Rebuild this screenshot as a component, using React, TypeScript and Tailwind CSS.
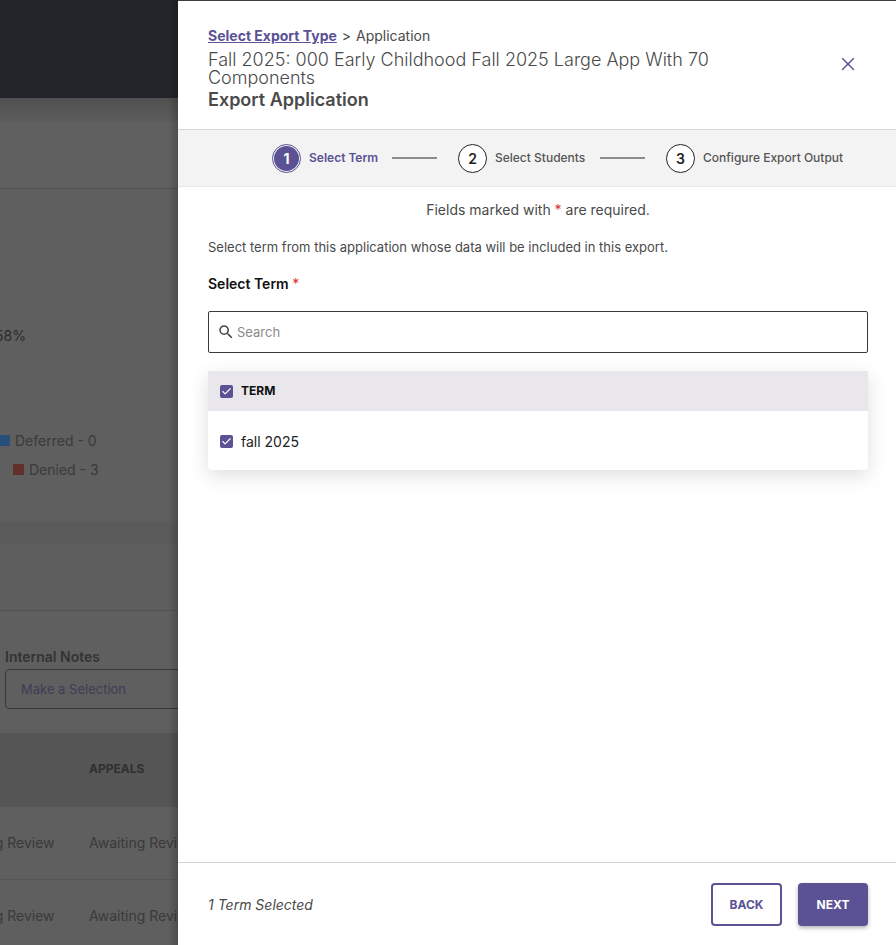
import { Check, X } from "lucide-react";

const steps = [
  { n: 1, label: "Select Term", active: true, width: "w-[69px]" },
  { n: 2, label: "Select Students", active: false, width: "w-[91px]" },
  { n: 3, label: "Configure Export Output", active: false, width: "w-[142px]" },
];

function Background() {
  return (
    <div className="relative flex h-full w-[178px] shrink-0 flex-col overflow-hidden bg-[#5f5f5f] text-[14px] text-[#3a3a3a]">
      <div className="h-[98px] shrink-0 bg-[#24252a]" />
      <div className="h-[24px] shrink-0 bg-gradient-to-b from-[#505050] to-[#5c5c5c]" />
      <div className="h-[67px] shrink-0 border-b border-[#525252] bg-[#606060]" />
      <div className="h-[137px] shrink-0" />
      <p className="-ml-[5px] h-[20px] shrink-0 leading-[20px] text-[#2b2b2b]">58%</p>
      <div className="h-[84px] shrink-0" />
      <div className="flex h-[20px] shrink-0 items-center gap-[5px]">
        <span className="h-[11px] w-[10px] bg-[#274f79]" />
        <span>Deferred - 0</span>
      </div>
      <div className="mt-[9px] ml-[13px] flex h-[20px] shrink-0 items-center gap-[5px]">
        <span className="h-[11px] w-[11px] bg-[#632f2b]" />
        <span>Denied - 3</span>
      </div>
      <div className="h-[42px] shrink-0" />
      <div className="h-[23px] shrink-0 bg-[#5b5b5b]" />
      <div className="h-[67px] shrink-0 border-b border-[#525252] bg-[#5e5e5e]" />
      <div className="flex h-[122px] shrink-0 flex-col pt-[37px] pl-[5px]">
        <span className="text-[14px] leading-[18px] font-semibold text-[#333333]">Internal Notes</span>
        <div className="mt-[3px] flex h-[40px] w-[200px] shrink-0 items-center rounded-[4px] border border-[#383838] pt-[1px] pl-[15px] text-[13px] text-[#413c54]">
          Make a Selection
        </div>
      </div>
      <div className="flex h-[74px] shrink-0 items-center bg-[#555555] pb-[3px] pl-[89px] text-[12px] font-bold text-[#303030]">
        APPEALS
      </div>
      {[0, 1].map((i) => (
        <div
          key={i}
          className={`flex h-[73px] shrink-0 items-center gap-[36px] whitespace-nowrap ${i === 0 ? "border-b border-[#565656] pb-[1px]" : "pb-[2px]"}`}
        >
          <span className="-ml-[53px] w-[106px] shrink-0">Awaiting Review</span>
          <span>Awaiting Review</span>
        </div>
      ))}
      <div className="absolute top-0 right-0 bottom-0 w-[10px] bg-gradient-to-r from-transparent to-[#00000030]" />
    </div>
  );
}

function Stepper() {
  return (
    <div className="flex h-[57px] shrink-0 items-center border-b border-[#e6e6e6] bg-[#f3f3f3] pl-[94px]">
      {steps.map((s, i) => (
        <div key={s.n} className="flex items-center">
          {s.active ? (
            <span className="flex h-[29px] w-[29px] items-center justify-center rounded-full border border-[#5a5294] bg-[#f3f3f3]">
              <span className="flex h-[25px] w-[25px] items-center justify-center rounded-full bg-[#5a5294] text-[14px] font-bold text-white">
                {s.n}
              </span>
            </span>
          ) : (
            <span className="flex h-[29px] w-[29px] items-center justify-center rounded-full border border-[#222222] bg-white text-[14px] font-semibold text-[#222222]">
              {s.n}
            </span>
          )}
          <span className={`ml-[8px] text-[12px] whitespace-nowrap ${s.width} ${s.active ? "font-semibold text-[#5a5294]" : "font-medium text-[#555555]"}`}>
            {s.label}
          </span>
          {i < 2 && <span className="mr-[21px] ml-[14px] h-[2px] w-[45px] bg-[#8c8c8c]" />}
        </div>
      ))}
    </div>
  );
}

function Tick() {
  return (
    <span className="flex h-[13px] w-[13px] shrink-0 items-center justify-center rounded-[2px] bg-[#5a5294]">
      <Check className="h-[11px] w-[11px] text-white" strokeWidth={2.5} />
    </span>
  );
}

export default function App() {
  return (
    <div className="flex h-[945px] w-[896px] overflow-hidden bg-white font-['Inter',sans-serif]">
      <Background />
      <div className="flex h-full w-[718px] shrink-0 flex-col border-t border-[#3f3f3f] bg-white">
        <div className="flex h-[129px] shrink-0 items-start justify-between border-b border-[#d4d4d4] pt-[26px] pr-[37px] pl-[30px]">
          <div className="w-[560px]">
            <p className="text-[14px] leading-[18px] text-[#4a4a4a]">
              <span className="font-bold text-[#5a5294] underline">Select Export Type</span>{" "}
              <span className="mx-[1px]">&gt;</span> Application
            </p>
            <h1 className="mt-[6px] text-[18px] leading-[18px] font-light text-[#4a4a4a]">
              Fall 2025: 000 Early Childhood Fall 2025 Large App With 70 Components
            </h1>
            <h2 className="mt-[1px] text-[18px] leading-[24px] font-semibold text-[#4a4a4a]">Export Application</h2>
          </div>
          <X className="mt-[26px] h-[22px] w-[22px] text-[#5a5294]" strokeWidth={1.5} />
        </div>
        <Stepper />
        <div className="flex flex-1 flex-col pr-[28px] pl-[30px]">
          <p className="mt-[14px] text-center text-[14px] leading-[18px] text-[#4a4a4a]">
            Fields marked with <span className="text-[#d9342b]">*</span> are required.
          </p>
          <p className="mt-[19px] text-[13px] leading-[18px] text-[#4a4a4a]">
            Select term from this application whose data will be included in this export.
          </p>
          <p className="mt-[19px] text-[14px] leading-[18px] font-semibold text-[#111111]">
            Select Term <span className="font-normal text-[#d9342b]">*</span>
          </p>
          <div className="mt-[18px] flex h-[42px] items-center gap-[2px] rounded-[2px] border border-[#3a3a3a] pl-[8px]">
            <svg viewBox="0 0 24 24" className="h-[18px] w-[18px] fill-[#444444]">
              <path d="M15.5 14h-.79l-.28-.27A6.471 6.471 0 0 0 16 9.5 6.5 6.5 0 1 0 9.5 16c1.61 0 3.09-.59 4.23-1.57l.27.28v.79l5 4.99L20.49 19l-4.99-5zm-6 0C7.01 14 5 11.99 5 9.5S7.01 5 9.5 5 14 7.01 14 9.5 11.99 14 9.5 14z" />
            </svg>
            <span className="mt-[1px] text-[13px] text-[#8a8a8a]">Search</span>
          </div>
          <div className="mt-[18px] overflow-hidden rounded-b-[4px] bg-white shadow-[0_6px_20px_rgba(0,0,0,0.13)]">
            <div className="flex h-[40px] items-center gap-[8px] bg-[#e9e7ec] pl-[12px] text-[12px] font-bold text-[#111111]">
              <Tick />
              TERM
            </div>
            <div className="flex h-[59px] items-center gap-[8px] pt-[1px] pl-[12px] text-[14px] text-[#222222]">
              <Tick />
              fall 2025
            </div>
          </div>
        </div>
        <div className="flex h-[83px] shrink-0 items-center justify-between border-t border-[#d4d4d4] pt-[1px] pr-[28px] pl-[30px]">
          <span className="text-[14px] text-[#4a4a4a] italic">1 Term Selected</span>
          <div className="flex gap-[16px]">
            <button className="h-[43px] w-[71px] rounded-[4px] border-2 border-[#5a5294] bg-white text-[12px] font-bold text-[#5a5294]">
              BACK
            </button>
            <button className="h-[43px] w-[70px] rounded-[4px] bg-[#5a5294] text-[12px] font-bold text-white shadow-[0_2px_4px_rgba(0,0,0,0.3)]">
              NEXT
            </button>
          </div>
        </div>
      </div>
    </div>
  );
}
